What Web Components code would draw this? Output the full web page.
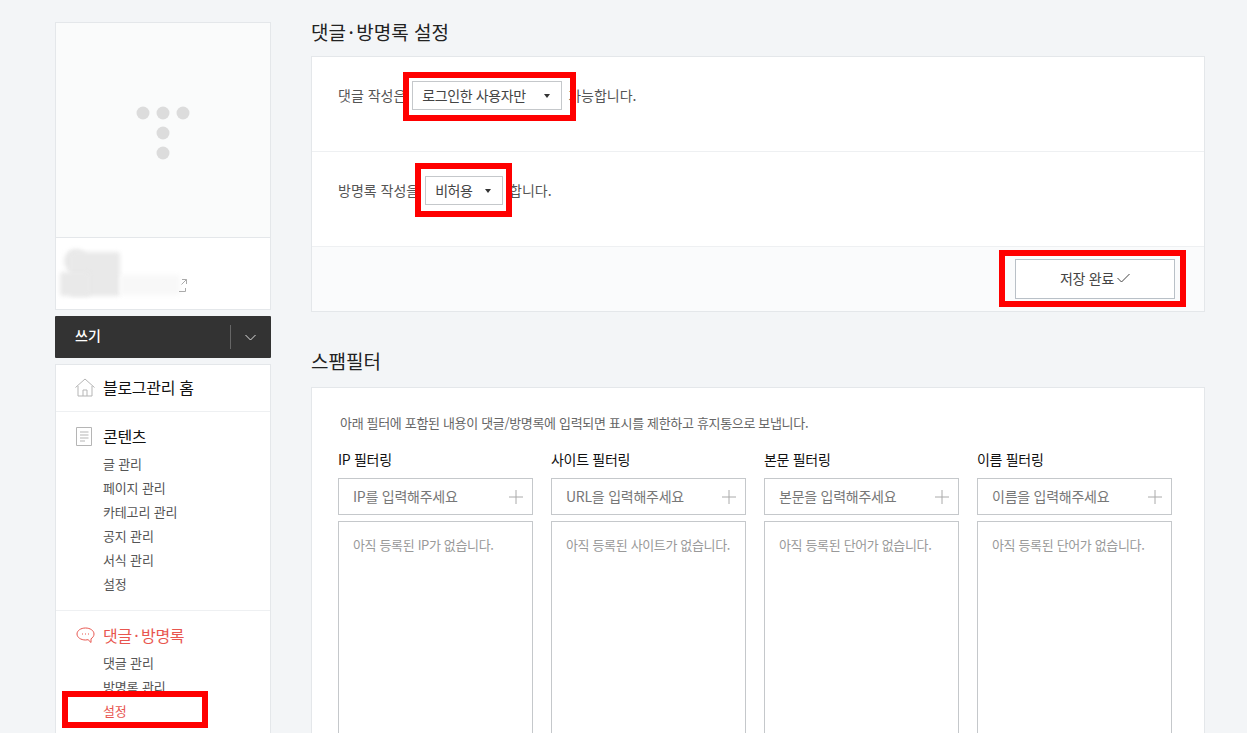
<!DOCTYPE html>
<html lang="ko">
<head>
<meta charset="UTF-8">
<title>댓글·방명록 설정</title>
<style>
    html, body { margin: 0; height: 733px; overflow: hidden; }
    body {
        background: #f3f5f7;
        color: #333;
        font: 14px "Noto Sans CJK KR", "Liberation Sans", sans-serif;
    }
</style>
</head>
<body>
<admin-page>
    <blog-sidebar slot="side"></blog-sidebar>

    <panel-section heading="댓글·방명록 설정">
        <setting-row>댓글 작성은 <fake-select style="--w:150px" label="로그인한 사용자만"></fake-select> 가능합니다.</setting-row>
        <setting-row>방명록 작성을 <fake-select style="--w:78px" label="비허용"></fake-select> 합니다.</setting-row>
        <save-bar></save-bar>
    </panel-section>

    <panel-section heading="스팸필터" style="--gap:39px;--below:15px">
        <spam-filters></spam-filters>
    </panel-section>
</admin-page>

<!-- annotation boxes drawn over the screenshot -->
<red-mark style="left:403px;top:72px;width:173px;height:49px"></red-mark>
<red-mark style="left:415px;top:163px;width:97px;height:54px"></red-mark>
<red-mark style="left:999px;top:250px;width:187px;height:57px"></red-mark>
<red-mark style="left:62px;top:691px;width:146px;height:37px"></red-mark>

<script>
    // ==================================================================== Helpers
    function define(tag, html, setup) {
        customElements.define(tag, class extends HTMLElement {
            constructor() {
                super().attachShadow({ mode: 'open' }).innerHTML = html;
                if (setup) setup.call(this, this.shadowRoot);
            }
        });
    }
    // the middle dot sits wider in the reference than the font gives it
    function withDot(el, text) {
        const [a, b] = text.split('·');
        if (b === undefined) { el.textContent = text; return; }
        const dot = document.createElement('span');
        dot.textContent = '·';
        dot.style.margin = '0 2.5px';
        el.append(a, dot, b);
    }
    // ==================================================================== <admin-page>
    define('admin-page', `
        <style>
            :host { display: flex; gap: 40px; padding: 22px 42px 0 55px; align-items: flex-start; }
            .side { flex: 0 0 216px; }
            main { flex: 1; min-width: 0; }
        </style>
        <div class="side"><slot name="side"></slot></div>
        <main><slot></slot></main>`);
    // ==================================================================== <red-mark>
    define('red-mark', `
        <style>
            :host { position: absolute; box-sizing: border-box; border: 6px solid #f00; }
        </style>`);
    // ==================================================================== <blog-sidebar>
    define('side-link', `
        <style>
            :host { display: block; height: 24px; line-height: 24px; font-size: 13px; letter-spacing: -.15px; color: #555; padding-left: 47px; }
            :host([on]) { color: #e8564f; }
        </style><slot></slot>`);
    define('side-group', `
        <style>
            :host { display: block; border-bottom: 1px solid #eef0f2; padding: 11px 0 14px; }
            :host(:last-child) { border-bottom: 0; }
            .head { display: flex; align-items: center; height: 26px; margin-bottom: 3px; padding-left: 20px; font-size: 16px; letter-spacing: -.3px; color: #111; }
            :host([on]) .head { color: #e8564f; }
            .ico { flex: 0 0 27px; display: flex; }
        </style>
        <div class="head"><span class="ico"><slot name="icon"></slot></span><span id="t"></span></div>
        <slot></slot>`, function (root) {
            withDot(root.getElementById('t'), this.getAttribute('title-text'));
        });
    define('blog-sidebar', `
        <style>
            :host { display: block; }
            .card { background: #fff; border: 1px solid #e4e7ea; }
            .thumb { box-sizing: border-box; height: 215px; padding-top: 6px; background: #fafbfb; border-bottom: 1px solid #e4e7ea; display: flex; align-items: center; justify-content: center; }
            .info { height: 71px; position: relative; overflow: hidden; }
            .blob { position: absolute; background: #e9e9e9; filter: blur(2px); }
            .info svg { position: absolute; left: 122px; top: 41px; }
            .write { margin-top: 6px; height: 42px; background: #333; color: #fff; border-radius: 1px; display: flex; align-items: center; font-size: 14px; font-weight: 500; }
            .write span { flex: 1; padding-left: 20px; margin-top: -4px; }
            .write i { display: flex; align-items: center; justify-content: center; box-sizing: border-box; width: 41px; height: 24px; padding-right: 2px; border-left: 1px solid #666; }
            nav { margin-top: 6px; }
            .home { box-sizing: border-box; height: 47px; padding: 0 0 2px 19px; display: flex; align-items: center; border-bottom: 1px solid #eef0f2; font-size: 16px; letter-spacing: -.3px; color: #111; }
            .home svg { flex: 0 0 20px; margin-right: 8px; }
        </style>
        <div class="card">
            <div class="thumb">
                <svg width="56" height="56" viewBox="0 0 56 56" fill="#dcdcdc">
                    <circle cx="8" cy="8" r="6.5"/><circle cx="28" cy="8" r="6.5"/><circle cx="48" cy="8" r="6.5"/>
                    <circle cx="28" cy="28" r="6.5"/><circle cx="28" cy="48" r="6.5"/>
                </svg>
            </div>
            <div class="info">
                <div class="blob" style="left:8px;top:11px;width:24px;height:24px;border-radius:50%"></div>
                <div class="blob" style="left:14px;top:14px;width:50px;height:44px;border-radius:3px"></div>
                <div class="blob" style="left:4px;top:34px;width:30px;height:24px;border-radius:3px"></div>
                <div class="blob" style="left:64px;top:37px;width:60px;height:20px;background:#f8f8f8"></div>
                <svg width="9" height="13" viewBox="0 0 9 13" fill="none" stroke="#aaa"><path d="M1 12.500H7.500V9M4 .5h4.500V5M8.500 .5 3.500 5.500"/></svg>
            </div>
        </div>
        <div class="write"><span>쓰기</span><i><svg width="11" height="7" viewBox="0 0 11 7" fill="none" stroke="#ddd"><path d="M.5 1 5.500 6 10.500 1"/></svg></i></div>
        <nav class="card">
            <div class="home">
                <svg width="20" height="19" viewBox="0 0 20 19" fill="none" stroke="#b5b5b5"><path d="M.5 9.500 10 1l9.500 8.500M3 8v10h14V8M8 18v-6h4v6"/></svg>
                블로그관리 홈
            </div>
            <side-group title-text="콘텐츠">
                <svg slot="icon" width="17" height="19" viewBox="0 0 17 19" fill="none" stroke="#b5b5b5"><path d="M.5.5h15v18H.5zM4 5h8.500M4 8h8.500M4 11h8.500M4 14h5"/></svg>
                <side-link>글 관리</side-link>
                <side-link>페이지 관리</side-link>
                <side-link>카테고리 관리</side-link>
                <side-link>공지 관리</side-link>
                <side-link>서식 관리</side-link>
                <side-link>설정</side-link>
            </side-group>
            <side-group title-text="댓글·방명록" on>
                <svg slot="icon" width="19" height="17" viewBox="0 0 19 17" fill="none" stroke="#e8564f"><path d="M9.500 1C4.800 1 1 3.600 1 7s3.800 6 8.500 6c.9 0 1.800-.1 2.600-.3L15 15.500v-3.700c1.800-1.100 3-2.800 3-4.800 0-3.400-3.800-6-8.500-6z"/><path d="M6 7h1M9 7h1M12 7h1"/></svg>
                <side-link>댓글 관리</side-link>
                <side-link>방명록 관리</side-link>
                <side-link on>설정</side-link>
            </side-group>
        </nav>`);
    // ==================================================================== <panel-section>
    define('panel-section', `
        <style>
            :host { display: block; margin-top: var(--gap, 0); }
            h2 { margin: -1px 0 var(--below, 13px); height: 22px; line-height: 22px; font-size: 19px; font-weight: 400; color: #222; }
            .box { background: #fff; border: 1px solid #e4e7ea; }
        </style>
        <h2 id="h"></h2>
        <div class="box"><slot></slot></div>`, function (root) {
            withDot(root.getElementById('h'), this.getAttribute('heading'));
        });
    // ==================================================================== <setting-row>
    define('setting-row', `
        <style>
            :host { display: block; box-sizing: border-box; height: 95px; padding: 24px 26px 0; border-bottom: 1px solid #eef0f2; font-size: 14px; line-height: 29px; color: #555; }
        </style><slot></slot>`);
    define('fake-select', `
        <style>
            :host { display: inline-flex; box-sizing: border-box; width: var(--w); height: 29px; margin: 0 2px; align-items: center; justify-content: space-between; padding: 0 11px 0 9px; background: #fff; border: 1px solid #c5c8cb; color: #444; font-size: 14px; letter-spacing: -.4px; vertical-align: top; }
            i { width: 0; height: 0; border: 3.500px solid transparent; border-top: 4px solid #333; border-bottom: 0; }
        </style>
        <span id="l"></span><i></i>`, function (root) {
            root.getElementById('l').textContent = this.getAttribute('label');
        });
    define('save-bar', `
        <style>
            :host { display: flex; justify-content: flex-end; height: 64px; box-sizing: border-box; padding: 12px 29px 0 0; background: #fafbfc; }
            button { width: 160px; height: 40px; background: #fff; border: 1px solid #b9c0c7; color: #444; font: 14px "Noto Sans CJK KR", sans-serif; letter-spacing: -.3px; display: flex; align-items: center; justify-content: center; gap: 3px; padding: 0 0 2px; }
        </style>
        <button>저장 완료<svg width="13" height="10" viewBox="0 0 13 10" fill="none" stroke="#444"><path d="M.5 5 4.500 9 12.500 1"/></svg></button>`);
    // ==================================================================== <spam-filters>
    define('filter-col', `
        <style>
            :host { display: block; }
            h3 { margin: 0 0 9px; height: 20px; line-height: 20px; font-size: 14px; letter-spacing: -.3px; font-weight: 400; color: #111; }
            .in { box-sizing: border-box; height: 37px; border: 1px solid #c5c8cb; display: flex; align-items: center; justify-content: space-between; padding: 0 9px 0 14px; font-size: 14px; letter-spacing: -.25px; color: #777; }
            .in span { margin-top: -2px; }
            .list { box-sizing: border-box; height: 300px; margin-top: 6px; border: 1px solid #c5c8cb; padding: 13px 14px; font-size: 13px; letter-spacing: -.35px; line-height: 20px; color: #999; }
        </style>
        <h3 id="t"></h3>
        <div class="in"><span id="p"></span><svg width="14" height="14" viewBox="0 0 14 14" stroke="#aaa"><path d="M7 0v14M0 7h14"/></svg></div>
        <div class="list" id="e"></div>`, function (root) {
            root.getElementById('t').textContent = this.getAttribute('name');
            root.getElementById('p').textContent = this.getAttribute('hint');
            root.getElementById('e').textContent = this.getAttribute('empty');
        });
    define('spam-filters', `
        <style>
            :host { display: block; padding: 25px 26px 0; }
            p { margin: 0 0 16px 2px; height: 20px; line-height: 20px; font-size: 13px; letter-spacing: -.33px; color: #666; }
            .cols { display: grid; grid-template-columns: repeat(4, 195px); column-gap: 18px; }
        </style>
        <p>아래 필터에 포함된 내용이 댓글/방명록에 입력되면 표시를 제한하고 휴지통으로 보냅니다.</p>
        <div class="cols">
            <filter-col name="IP 필터링" hint="IP를 입력해주세요" empty="아직 등록된 IP가 없습니다."></filter-col>
            <filter-col name="사이트 필터링" hint="URL을 입력해주세요" empty="아직 등록된 사이트가 없습니다."></filter-col>
            <filter-col name="본문 필터링" hint="본문을 입력해주세요" empty="아직 등록된 단어가 없습니다."></filter-col>
            <filter-col name="이름 필터링" hint="이름을 입력해주세요" empty="아직 등록된 단어가 없습니다."></filter-col>
        </div>`);
</script>
</body>
</html>
